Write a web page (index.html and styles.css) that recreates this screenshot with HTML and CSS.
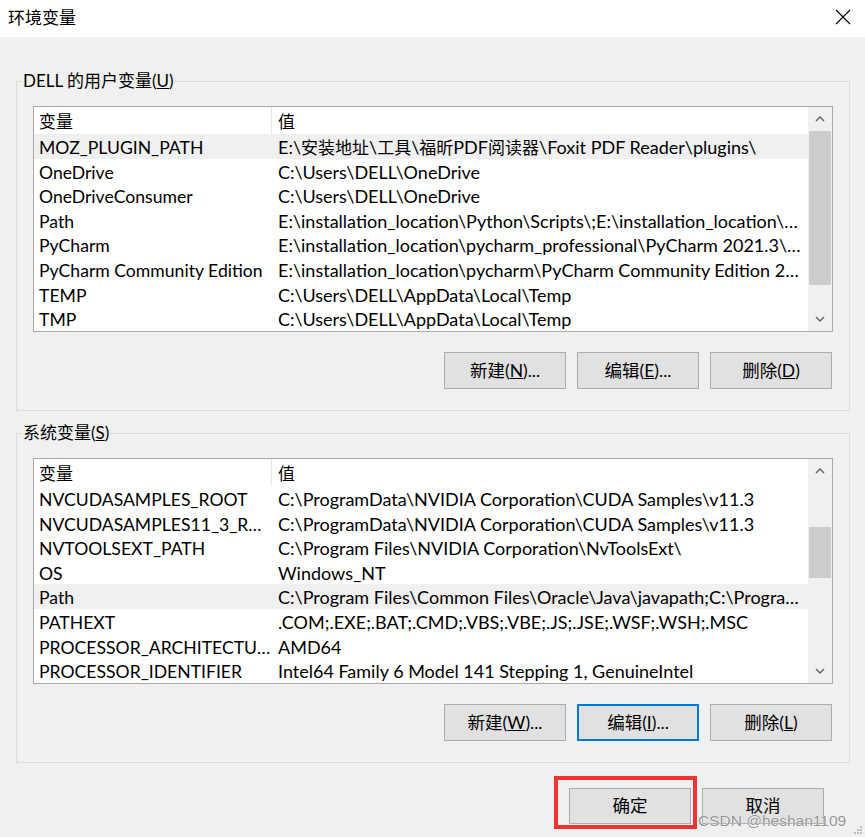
FILE: index.html
```html
<!DOCTYPE html>
<html lang="zh-CN">
<head>
<meta charset="utf-8">
<title>环境变量</title>
<link rel="stylesheet" href="styles.css">
</head>
<body>
<div class="window">
  <div class="titlebar">
    <span class="title">环境变量</span>
    <svg class="close" width="16" height="16" viewBox="0 0 16 16"><path d="M1 1 L15 15 M15 1 L1 15" stroke="#000" stroke-width="1.1" fill="none"/></svg>
  </div>

  <fieldset class="group group-user">
    <legend>DELL 的用户变量(<u>U</u>)</legend>
    <div class="list">
      <div class="list-main">
        <div class="row head"><div class="c1">变量</div><div class="c2">值</div></div>
        <div class="row sel"><div class="c1">MOZ_PLUGIN_PATH</div><div class="c2">E:\<span class="cjk">安装地址</span>\<span class="cjk">工具</span>\<span class="cjk">福昕</span>PDF<span class="cjk">阅读器</span>\Foxit PDF Reader\plugins\</div></div>
        <div class="row"><div class="c1">OneDrive</div><div class="c2">C:\Users\DELL\OneDrive</div></div>
        <div class="row"><div class="c1">OneDriveConsumer</div><div class="c2">C:\Users\DELL\OneDrive</div></div>
        <div class="row"><div class="c1">Path</div><div class="c2">E:\installation_location\Python\Scripts\;E:\installation_location\Python\</div></div>
        <div class="row"><div class="c1">PyCharm</div><div class="c2">E:\installation_location\pycharm_professional\PyCharm 2021.3\bin;</div></div>
        <div class="row"><div class="c1">PyCharm Community Edition</div><div class="c2">E:\installation_location\pycharm\PyCharm Community Edition 2021.3\bin;</div></div>
        <div class="row"><div class="c1">TEMP</div><div class="c2">C:\Users\DELL\AppData\Local\Temp</div></div>
        <div class="row"><div class="c1">TMP</div><div class="c2">C:\Users\DELL\AppData\Local\Temp</div></div>
      </div>
      <div class="scrollbar">
        <div class="sb-btn"><svg width="10" height="6" viewBox="0 0 10 6"><path d="M1 5 L5 1 L9 5" stroke="#606060" stroke-width="1.4" fill="none"/></svg></div>
        <div class="sb-track"><div class="thumb thumb-user"></div></div>
        <div class="sb-btn"><svg width="10" height="6" viewBox="0 0 10 6"><path d="M1 1 L5 5 L9 1" stroke="#606060" stroke-width="1.4" fill="none"/></svg></div>
      </div>
    </div>
    <div class="btns">
      <button class="btn">新建(<u>N</u>)...</button>
      <button class="btn">编辑(<u>E</u>)...</button>
      <button class="btn">删除(<u>D</u>)</button>
    </div>
  </fieldset>

  <fieldset class="group group-sys">
    <legend>系统变量(<u>S</u>)</legend>
    <div class="list">
      <div class="list-main">
        <div class="row head"><div class="c1">变量</div><div class="c2">值</div></div>
        <div class="row"><div class="c1">NVCUDASAMPLES_ROOT</div><div class="c2">C:\ProgramData\NVIDIA Corporation\CUDA Samples\v11.3</div></div>
        <div class="row"><div class="c1">NVCUDASAMPLES11_3_ROOT</div><div class="c2">C:\ProgramData\NVIDIA Corporation\CUDA Samples\v11.3</div></div>
        <div class="row"><div class="c1">NVTOOLSEXT_PATH</div><div class="c2">C:\Program Files\NVIDIA Corporation\NvToolsExt\</div></div>
        <div class="row"><div class="c1">OS</div><div class="c2">Windows_NT</div></div>
        <div class="row sel"><div class="c1">Path</div><div class="c2">C:\Program Files\Common Files\Oracle\Java\javapath;C:\Program Files\</div></div>
        <div class="row"><div class="c1">PATHEXT</div><div class="c2">.COM;.EXE;.BAT;.CMD;.VBS;.VBE;.JS;.JSE;.WSF;.WSH;.MSC</div></div>
        <div class="row"><div class="c1">PROCESSOR_ARCHITECTURE</div><div class="c2">AMD64</div></div>
        <div class="row"><div class="c1">PROCESSOR_IDENTIFIER</div><div class="c2">Intel64 Family 6 Model 141 Stepping 1, GenuineIntel</div></div>
      </div>
      <div class="scrollbar">
        <div class="sb-btn"><svg width="10" height="6" viewBox="0 0 10 6"><path d="M1 5 L5 1 L9 5" stroke="#606060" stroke-width="1.4" fill="none"/></svg></div>
        <div class="sb-track"><div class="thumb thumb-sys"></div></div>
        <div class="sb-btn"><svg width="10" height="6" viewBox="0 0 10 6"><path d="M1 1 L5 5 L9 1" stroke="#606060" stroke-width="1.4" fill="none"/></svg></div>
      </div>
    </div>
    <div class="btns">
      <button class="btn">新建(<u>W</u>)...</button>
      <button class="btn focused">编辑(<u>I</u>)...</button>
      <button class="btn">删除(<u>L</u>)</button>
    </div>
  </fieldset>

  <div class="footer">
    <button class="btn">确定</button>
    <button class="btn">取消</button>
  </div>

  <div class="annotation"></div>
  <div class="watermark">CSDN @heshan1109</div>
  <svg class="grip" width="10" height="10" viewBox="0 0 10 10">
    <rect x="7" y="1" width="2" height="2" fill="#bcbcbc"/>
    <rect x="4" y="4" width="2" height="2" fill="#bcbcbc"/>
    <rect x="7" y="4" width="2" height="2" fill="#bcbcbc"/>
    <rect x="1" y="7" width="2" height="2" fill="#bcbcbc"/>
    <rect x="4" y="7" width="2" height="2" fill="#bcbcbc"/>
    <rect x="7" y="7" width="2" height="2" fill="#bcbcbc"/>
  </svg>
</div>
</body>
</html>
```

FILE: styles.css
```css
* { box-sizing: border-box; }

html, body {
  margin: 0;
  padding: 0;
  background: #f0f0f0;
}

body {
  font-family: Lato, "Noto Sans CJK SC", sans-serif;
  font-size: 17px;
  color: #000;
}

.window {
  position: relative;
  width: 865px;
  height: 837px;
  overflow: hidden;
  background: #f0f0f0;
}

.titlebar {
  height: 37px;
  background: #fff;
  display: flex;
  align-items: center;
  justify-content: space-between;
  padding: 0 14px 0 8px;
}

.title {
  font-size: 17px;
  line-height: 22px;
  padding-bottom: 1px;
}

.close {
  display: block;
  margin-top: -3px;
}

.group {
  margin: 0 15px 0 16px;
  padding: 14px 16px 21px 16px;
  border: 1px solid #dcdcdc;
  min-width: 0;
}

.group-user { margin-top: 33px; }
.group-sys { margin-top: 11px; }

.group legend {
  margin-left: -11px;
  padding: 0 1px;
  font-size: 17px;
  line-height: 22px;
}

.list {
  display: flex;
  height: 226px;
  border: 1px solid #a9a9a9;
  background: #fff;
}

.list-main {
  flex: 1;
  min-width: 0;
  display: flex;
  flex-direction: column;
}

.row {
  display: flex;
  height: 24.6px;
  line-height: 27px;
  white-space: nowrap;
}

.row.head {
  height: 27px;
  line-height: 29px;
  font-size: 17px;
}

.row.sel {
  background: #f0f0f0;
}

.cjk {
  font-size: 17px;
}

.c1 {
  width: 238px;
  flex: none;
  padding: 0 0 0 5px;
  overflow: hidden;
  text-overflow: ellipsis;
  font-size: 17.6px;
}

.head .c1 {
  border-right: 1px solid #e5e5e5;
  font-size: 17px;
}

.c2 {
  flex: 1;
  min-width: 0;
  padding: 0 6px;
  overflow: hidden;
  text-overflow: ellipsis;
  font-size: 18px;
}

.head .c2 {
  font-size: 17px;
}

.scrollbar {
  width: 24px;
  flex: none;
  background: #f0f0f0;
  display: flex;
  flex-direction: column;
}

.sb-btn {
  height: 24px;
  flex: none;
  display: flex;
  align-items: center;
  justify-content: center;
}

.sb-btn svg { display: block; }

.sb-track {
  flex: 1;
  display: flex;
  flex-direction: column;
}

.thumb {
  background: #cdcdcd;
  margin-left: 1px;
  margin-right: 1px;
}

.thumb-user { margin-top: 0; height: 154px; }
.thumb-sys { margin-top: 44px; height: 51px; }

.btns {
  display: flex;
  justify-content: flex-end;
  gap: 11px;
  margin-top: 20px;
  padding-right: 1px;
}

.btn {
  width: 122px;
  height: 37px;
  background: #e1e1e1;
  border: 1px solid #adadad;
  font-family: Lato, "Noto Sans CJK SC", sans-serif;
  font-size: 17.5px;
  color: #000;
  padding: 0;
  margin: 0;
  line-height: 22px;
}

.btn.focused {
  border: 2px solid #0078d7;
}

.footer {
  display: flex;
  justify-content: flex-end;
  gap: 11px;
  margin-top: 25px;
  padding-right: 41px;
}

.footer .btn {
  height: 36px;
}

.annotation {
  position: absolute;
  left: 554px;
  top: 776px;
  width: 143px;
  height: 53px;
  border: 4px solid #ee3333;
}

.watermark {
  position: absolute;
  left: 698px;
  top: 811px;
  font-family: "Liberation Sans", Arial, sans-serif;
  font-size: 15.5px;
  line-height: 20px;
  color: rgba(110, 110, 110, 0.75);
  text-shadow: 0 0 1px #fff, 0 0 1px #fff;
  white-space: nowrap;
}

.grip {
  position: absolute;
  right: 2px;
  bottom: 2px;
}
```
